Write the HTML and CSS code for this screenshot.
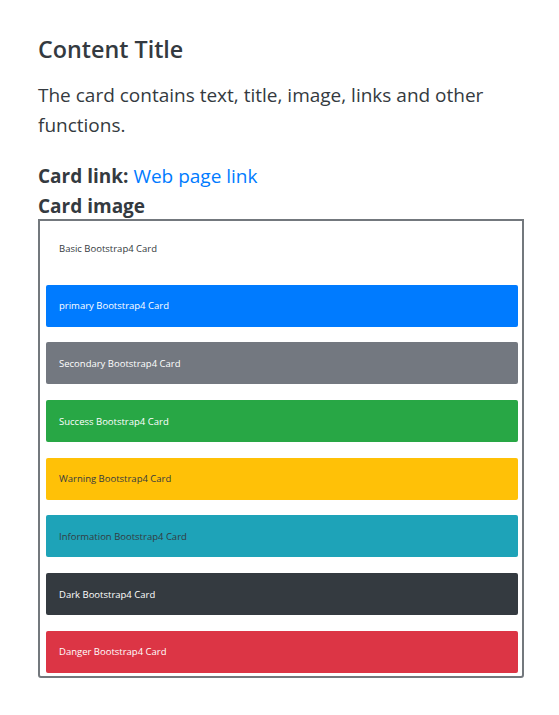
FILE: index.html
```html
<!DOCTYPE html>
<html>
<head>
<meta charset="utf-8">
<link rel="stylesheet" href="styles.css">
</head>
<body>
<div class="content">
  <h4 class="title">Content Title</h4>
  <p class="lead">The card contains text, title, image, links and other functions.</p>
  <div class="label-row"><strong>Card link:</strong> <a class="link" href="#">Web page link</a></div>
  <div class="label-row"><strong>Card image</strong></div>
  <div class="image-box">
    <div class="card card-basic">Basic Bootstrap4 Card</div>
    <div class="card card-primary">primary Bootstrap4 Card</div>
    <div class="card card-secondary">Secondary Bootstrap4 Card</div>
    <div class="card card-success">Success Bootstrap4 Card</div>
    <div class="card card-warning">Warning Bootstrap4 Card</div>
    <div class="card card-info">Information Bootstrap4 Card</div>
    <div class="card card-dark">Dark Bootstrap4 Card</div>
    <div class="card card-danger">Danger Bootstrap4 Card</div>
  </div>
</div>
</body>
</html>
```

FILE: styles.css
```css
html, body {
  margin: 0;
  padding: 0;
  background: #fff;
}
body {
  font-family: "Open Sans", "Noto Sans", sans-serif;
  color: #343a40;
}
.content {
  width: 486px;
  padding: 35px 0 0 38px;
}
.title {
  margin: 0;
  font-size: 23.3px;
  font-weight: 600;
  line-height: 29px;
}
.lead {
  margin: 16px 0 21px;
  font-size: 19px;
  line-height: 30px;
}
.label-row {
  font-size: 19px;
  line-height: 30px;
}
.label-row strong {
  font-weight: 700;
}
.link {
  color: #007bff;
  text-decoration: none;
}
.image-box {
  margin-top: -2px;
  border: 2px solid #73787d;
  border-radius: 0 0 3px 3px;
  padding: 6px 4px 3px 6px;
  display: flex;
  flex-direction: column;
  gap: 15.7px;
}
.card {
  height: 42px;
  display: flex;
  align-items: center;
  padding-left: 13px;
  font-size: 9.5px;
  border-radius: 2px;
  color: #fff;
}
.card-basic { background: #fff; color: #343a40; }
.card-primary { background: #007bff; }
.card-secondary { background: #737880; }
.card-success { background: #28a745; }
.card-warning { background: #ffc107; color: #343a40; }
.card-info { background: #1ea3b8; color: #343a40; }
.card-dark { background: #343a40; }
.card-danger { background: #dc3545; }
```
